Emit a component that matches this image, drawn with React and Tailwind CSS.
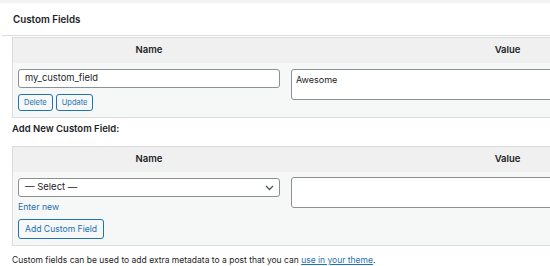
import React from "react";

const font = { fontFamily: "Inter, 'Liberation Sans', sans-serif" };

// Small chevron used on the select box
function Chevron() {
  return (
    <svg width="9" height="6" viewBox="0 0 9 6" fill="none">
      <path d="M1 1l3.5 3.5L8 1" stroke="#50575e" strokeWidth="1.3" />
    </svg>
  );
}

function HeaderRow() {
  return (
    <div className="flex h-[25px] items-center bg-[#f0f0f1] text-[9.5px] font-semibold text-[#1d2327]">
      <div className="w-[272px] text-center">Name</div>
      <div className="flex-1 text-center">Value</div>
    </div>
  );
}

export default function App() {
  return (
    <div
      className="w-[550px] h-[266px] overflow-hidden bg-white text-[#1d2327]"
      style={font}
    >
      <div className="h-[3px] bg-[#f3f3f4]" />

      {/* Box heading */}
      <div className="ml-[2px] flex h-[33px] items-center border-b border-[#dcdcde] pl-[11px] pt-[2px] text-[9.8px] font-semibold">
        Custom Fields
      </div>

      <div className="pl-3">
        {/* Existing fields */}
        <div className="mt-[1px] w-[719px] border border-[#dcdcde]">
          <HeaderRow />
          <div className="flex bg-[#f6f7f7] pt-[6px] pb-[6px]">
            <div className="w-[272px] pl-[5px] pr-[5px]">
              <div className="flex h-[19px] items-center rounded-[3px] border border-[#8c8f94] bg-white pl-[6px] text-[9.4px]">
                my_custom_field
              </div>
              <div className="mt-[6px] flex gap-[3px]">
                <button className="h-[17px] rounded-[3px] border border-[#2271b1] bg-[#f6f7f7] px-[5px] text-[7.5px] text-[#2271b1]">
                  Delete
                </button>
                <button className="h-[17px] rounded-[3px] border border-[#2271b1] bg-[#f6f7f7] px-[5px] text-[7.5px] text-[#2271b1]">
                  Update
                </button>
              </div>
            </div>
            <div className="flex-1 pl-[6px] pr-[6px]">
              <div className="h-[31px] rounded-[3px] border border-[#8c8f94] bg-white pl-[4px] pt-[3px] text-[9px]">
                Awesome
              </div>
            </div>
          </div>
        </div>

        <div className="mt-[2px] h-[18px] text-[9.5px] font-semibold leading-[18px]">
          Add New Custom Field:
        </div>

        {/* New field */}
        <div className="mt-[8px] w-[719px] border border-[#dcdcde]">
          <HeaderRow />
          <div className="flex bg-[#f6f7f7] pt-[6px] pb-[6px]">
            <div className="w-[272px] pl-[5px] pr-[5px]">
              <div className="flex h-[19px] items-center justify-between rounded-[3px] border border-[#8c8f94] bg-white pl-[6px] pr-[5px] text-[9.5px]">
                <span>— Select —</span>
                <Chevron />
              </div>
              <div className="mt-[4px] h-[12px] text-[8.7px] leading-[12px] text-[#2271b1]">
                Enter new
              </div>
              <button className="mt-[6px] h-[20px] rounded-[3px] border border-[#2271b1] bg-[#f6f7f7] px-[6px] text-[8.6px] text-[#2271b1]">
                Add Custom Field
              </button>
            </div>
            <div className="flex-1 pl-[6px] pr-[6px]">
              <div className="-mt-[1px] h-[31px] rounded-[3px] border border-[#8c8f94] bg-white" />
            </div>
          </div>
        </div>

        <p className="mt-[8px] text-[8.5px] leading-[12px]">
          Custom fields can be used to add extra metadata to a post that you can{" "}
          <a href="#" className="text-[#2271b1] underline">
            use in your theme
          </a>
          .
        </p>
      </div>
    </div>
  );
}
